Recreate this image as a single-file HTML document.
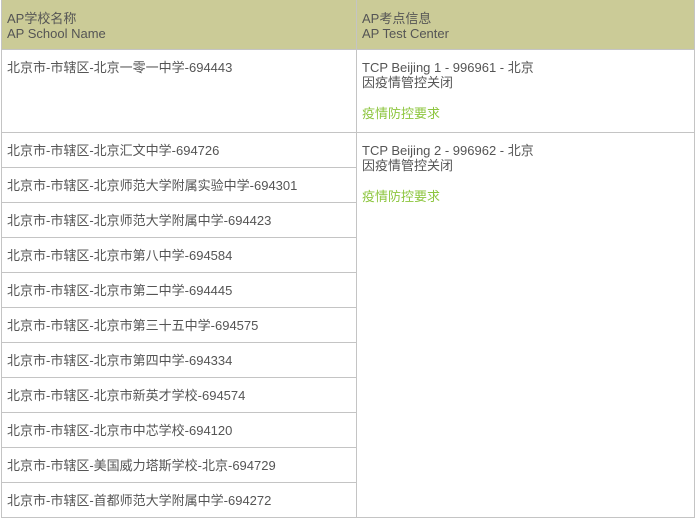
<!DOCTYPE html>
<html><head><meta charset="utf-8"><style>
body{margin:0;background:#fff;width:696px;height:519px;overflow:hidden;font-family:"Liberation Sans","Noto Sans CJK SC",sans-serif;font-size:13px;color:#555;}
.a{position:absolute;}
.hl{position:absolute;background:#c4c4c4;height:1px;}
.vl{position:absolute;background:#c4c4c4;width:1px;}
.t{position:absolute;line-height:15px;white-space:nowrap;margin-top:1px;}
.g{color:#8dc63f;}
</style></head><body>
<div class="a" style="left:1px;top:0;width:694px;height:49px;background:#cbcb97"></div>
<div class="vl" style="left:1px;top:0;height:518px"></div>
<div class="vl" style="left:356px;top:0;height:518px"></div>
<div class="vl" style="left:694px;top:0;height:518px"></div>
<div class="hl" style="left:1px;top:49px;width:694px"></div>
<div class="hl" style="left:1px;top:132px;width:694px"></div>
<div class="hl" style="left:1px;top:517px;width:694px"></div>
<div class="t" style="left:7px;top:10px">AP学校名称<br>AP School Name</div>
<div class="t" style="left:362px;top:10px">AP考点信息<br>AP Test Center</div>
<div class="t" style="left:7px;top:59px">北京市-市辖区-北京一零一中学-694443</div>
<div class="t" style="left:362px;top:59px">TCP Beijing 1 - 996961 - 北京<br>因疫情管控关闭</div>
<div class="t g" style="left:362px;top:105px">疫情防控要求</div>
<div class="t" style="left:362px;top:142px">TCP Beijing 2 - 996962 - 北京<br>因疫情管控关闭</div>
<div class="t g" style="left:362px;top:188px">疫情防控要求</div>
<div class="hl" style="left:1px;top:167px;width:355px"></div>
<div class="hl" style="left:1px;top:202px;width:355px"></div>
<div class="hl" style="left:1px;top:237px;width:355px"></div>
<div class="hl" style="left:1px;top:272px;width:355px"></div>
<div class="hl" style="left:1px;top:307px;width:355px"></div>
<div class="hl" style="left:1px;top:342px;width:355px"></div>
<div class="hl" style="left:1px;top:377px;width:355px"></div>
<div class="hl" style="left:1px;top:412px;width:355px"></div>
<div class="hl" style="left:1px;top:447px;width:355px"></div>
<div class="hl" style="left:1px;top:482px;width:355px"></div>
<div class="t" style="left:7px;top:142px">北京市-市辖区-北京汇文中学-694726</div>
<div class="t" style="left:7px;top:177px">北京市-市辖区-北京师范大学附属实验中学-694301</div>
<div class="t" style="left:7px;top:212px">北京市-市辖区-北京师范大学附属中学-694423</div>
<div class="t" style="left:7px;top:247px">北京市-市辖区-北京市第八中学-694584</div>
<div class="t" style="left:7px;top:282px">北京市-市辖区-北京市第二中学-694445</div>
<div class="t" style="left:7px;top:317px">北京市-市辖区-北京市第三十五中学-694575</div>
<div class="t" style="left:7px;top:352px">北京市-市辖区-北京市第四中学-694334</div>
<div class="t" style="left:7px;top:387px">北京市-市辖区-北京市新英才学校-694574</div>
<div class="t" style="left:7px;top:422px">北京市-市辖区-北京市中芯学校-694120</div>
<div class="t" style="left:7px;top:457px">北京市-市辖区-美国威力塔斯学校-北京-694729</div>
<div class="t" style="left:7px;top:492px">北京市-市辖区-首都师范大学附属中学-694272</div>
</body></html>
